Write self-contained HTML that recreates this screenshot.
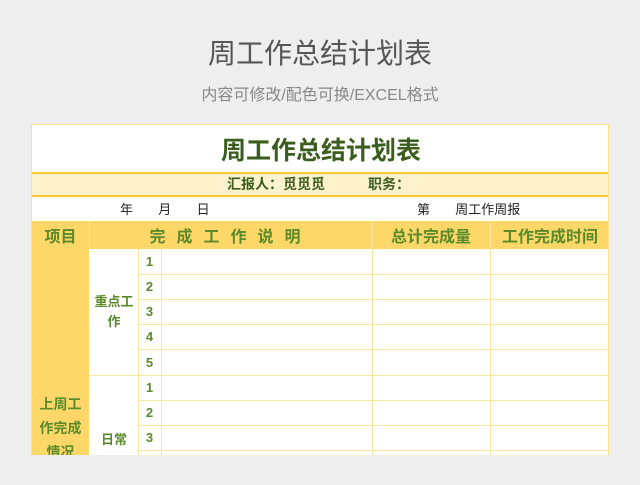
<!DOCTYPE html>
<html><head><meta charset="utf-8"><style>
*{margin:0;padding:0;box-sizing:border-box}
body{width:640px;height:485px;background:#eeeeee;position:relative;overflow:hidden;font-family:"Liberation Sans","Noto Sans CJK SC",sans-serif}
.a{position:absolute}
.t1{left:0;width:640px;top:37px;text-align:center;font-size:28px;color:#555;line-height:34px}
.t2{left:0;width:640px;top:86px;text-align:center;font-size:16px;color:#888;line-height:20px}
.sheet{left:31px;top:124px;width:578px;height:331px;background:#fff;overflow:hidden;border:1px solid #fde08a;border-bottom:none}
.c{position:absolute;display:flex;align-items:center;justify-content:center;text-align:center}
.g{color:#5a8a2a;font-weight:bold}
.hl{position:absolute;height:1px;background:#fde79c}
.vl{position:absolute;width:1px;background:#fde79c}
</style></head><body>
<div class="a t1">周工作总结计划表</div>
<div class="a t2">内容可修改/配色可换/EXCEL格式</div>
<div class="a sheet">
 <div class="c" style="left:0;top:0;width:578px;height:47px;font-size:25px;font-weight:bold;color:#3b5e1e">周工作总结计划表</div>
 <div class="a" style="left:0;top:47px;width:578px;height:2px;background:#fcc92e"></div>
 <div class="a" style="left:0;top:49px;width:578px;height:21px;background:#fef3cc"></div>
 <div class="a" style="left:195px;top:50px;line-height:19px;font-size:14px;font-weight:bold;color:#3b5e1e">汇报人：觅觅觅</div>
 <div class="a" style="left:336px;top:50px;line-height:19px;font-size:14px;font-weight:bold;color:#3b5e1e">职务：</div>
 <div class="a" style="left:0;top:70px;width:578px;height:2px;background:#fcc92e"></div>
 <div class="a" style="left:88px;top:74px;font-size:13px;color:#222">年&nbsp;&nbsp;&nbsp;&nbsp;&nbsp;&nbsp;&nbsp;月&nbsp;&nbsp;&nbsp;&nbsp;&nbsp;&nbsp;&nbsp;日</div>
 <div class="a" style="left:385px;top:74px;font-size:13px;color:#222">第&nbsp;&nbsp;&nbsp;&nbsp;&nbsp;&nbsp;&nbsp;周工作周报</div>
 <div class="a" style="left:0;top:96px;width:578px;height:28px;background:#fdd868"></div>
 <div class="vl" style="left:57px;top:96px;height:28px"></div>
 <div class="vl" style="left:340px;top:96px;height:28px"></div>
 <div class="vl" style="left:458px;top:96px;height:28px"></div>
 <div class="c g" style="left:0;top:96px;width:57px;height:28px;font-size:16px">项目</div>
 <div class="c g" style="left:57px;top:96px;width:283px;height:28px;font-size:16px;letter-spacing:11px">完成工作说明</div>
 <div class="c g" style="left:340px;top:96px;width:118px;height:28px;font-size:16px">总计完成量</div>
 <div class="c g" style="left:458px;top:96px;width:120px;height:28px;font-size:16px">工作完成时间</div>
 <div class="a" style="left:0;top:124px;width:57px;height:220px;background:#fdd868"></div>
 <div class="c g" style="left:0;top:265px;width:57px;height:75px;font-size:14px;line-height:24px;padding:0 4px">上周工作完成情况</div>
 <div class="c g" style="left:57px;top:124px;width:50px;height:126px;font-size:13px;line-height:20px;padding:0 2px">重点工作</div>
 <div class="c g" style="left:57px;top:300px;width:50px;height:26px;font-size:13px">日常</div>
 <div class="vl" style="left:106px;top:124px;height:220px"></div>
 <div class="vl" style="left:129px;top:124px;height:220px"></div>
 <div class="vl" style="left:340px;top:124px;height:220px"></div>
 <div class="vl" style="left:458px;top:124px;height:220px"></div>
 <div class="hl" style="left:107px;top:149px;width:471px"></div>
 <div class="hl" style="left:107px;top:174px;width:471px"></div>
 <div class="hl" style="left:107px;top:199px;width:471px"></div>
 <div class="hl" style="left:107px;top:224px;width:471px"></div>
 <div class="hl" style="left:57px;top:250px;width:521px"></div>
 <div class="hl" style="left:107px;top:275px;width:471px"></div>
 <div class="hl" style="left:107px;top:300px;width:471px"></div>
 <div class="hl" style="left:107px;top:325px;width:471px"></div>
 <div class="c g" style="left:106px;top:124px;width:23px;height:25px;font-size:13px">1</div>
 <div class="c g" style="left:106px;top:149px;width:23px;height:25px;font-size:13px">2</div>
 <div class="c g" style="left:106px;top:174px;width:23px;height:25px;font-size:13px">3</div>
 <div class="c g" style="left:106px;top:199px;width:23px;height:25px;font-size:13px">4</div>
 <div class="c g" style="left:106px;top:224px;width:23px;height:26px;font-size:13px">5</div>
 <div class="c g" style="left:106px;top:250px;width:23px;height:25px;font-size:13px">1</div>
 <div class="c g" style="left:106px;top:275px;width:23px;height:25px;font-size:13px">2</div>
 <div class="c g" style="left:106px;top:300px;width:23px;height:25px;font-size:13px">3</div>
</div>
</body></html>
